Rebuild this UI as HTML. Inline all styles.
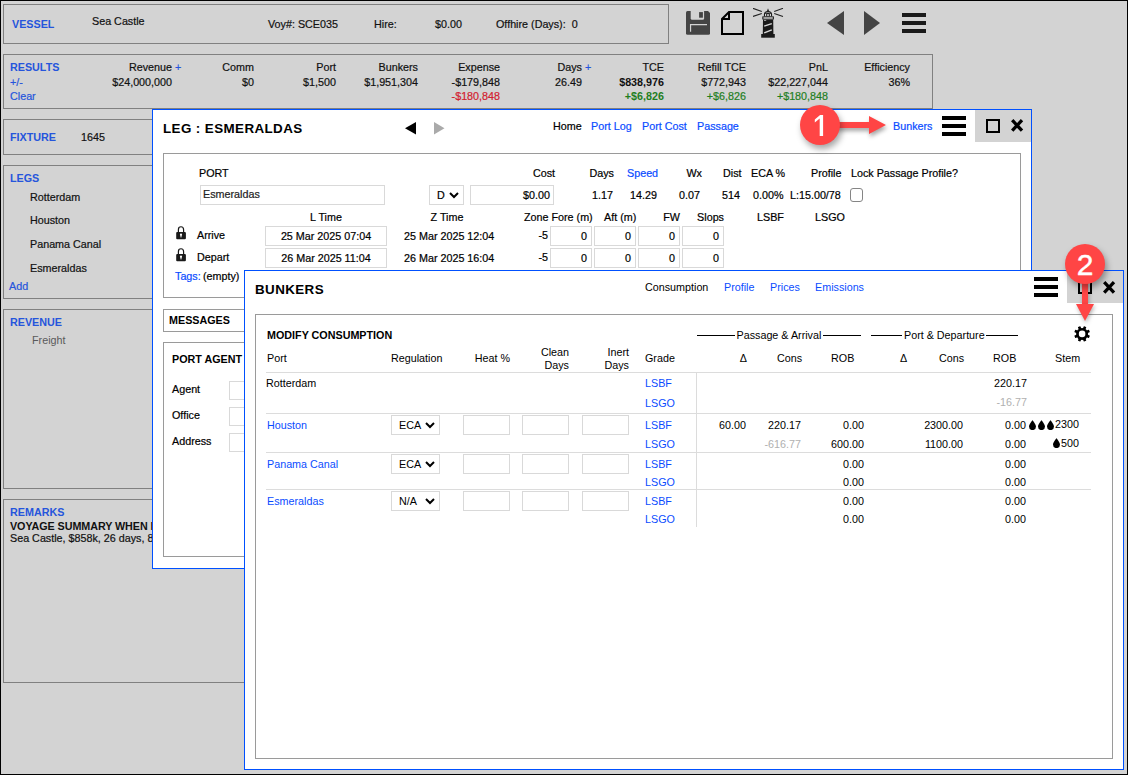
<!DOCTYPE html><html><head><meta charset="utf-8"><style>html,body{margin:0;padding:0;}body{width:1128px;height:775px;overflow:hidden;position:relative;background:#d3d3d3;font-family:'Liberation Sans', sans-serif;}.t{position:absolute;white-space:pre;-webkit-text-stroke:0.2px currentColor;}.b{position:absolute;box-sizing:content-box;}</style></head><body>
<div class="b" style="left:0px;top:0px;width:1126px;height:773px;border:1px solid #000;background:#d3d3d3;"></div>
<div class="b" style="left:3px;top:4px;width:664px;height:38px;border:1px solid #808080;background:transparent;"></div>
<div class="t" style="top:18px;font-size:10.75px;line-height:12px;color:#2555dc;font-weight:bold;-webkit-text-stroke:0;left:12px;">VESSEL</div>
<div class="t" style="top:15px;font-size:10.75px;line-height:12px;color:#111;left:92px;">Sea Castle</div>
<div class="t" style="top:17.5px;font-size:10.75px;line-height:12px;color:#111;left:268px;">Voy#: SCE035</div>
<div class="t" style="top:18px;font-size:10.75px;line-height:12px;color:#111;left:374px;">Hire:</div>
<div class="t" style="top:18px;font-size:10.75px;line-height:12px;color:#111;left:435px;">$0.00</div>
<div class="t" style="top:18px;font-size:10.75px;line-height:12px;color:#111;left:496px;">Offhire (Days):  0</div>
<svg class="b" style="left:686px;top:11px;" width="24" height="24" viewBox="0 0 24 24"><path d="M0 1.5Q0 0 1.5 0H22L24 2V22.2Q24 23.7 22.5 23.7H1.5Q0 23.7 0 22.2Z" fill="#444"/><path d="M4.7 0H18.1V7.3Q18.1 8.8 16.6 8.8H6.2Q4.7 8.8 4.7 7.3Z" fill="#d3d3d3"/><rect x="13.1" y="1.1" width="3.8" height="5.6" fill="#444"/><path d="M4.55 20.8V13.65H21" fill="none" stroke="#d3d3d3" stroke-width="1.2"/></svg>
<svg class="b" style="left:721px;top:11px;" width="24" height="24" viewBox="0 0 24 24"><path d="M8 1H22V23H1V8Z M1 8H8V1" fill="none" stroke="#000" stroke-width="2"/></svg>
<svg class="b" style="left:753px;top:8px;" width="31" height="31" viewBox="0 0 31 31"><path d="M0 0.3L8.8 3.5M0 8.4L8.8 5.4M30 0.3L21.2 3.5M30 8.4L21.2 5.4" stroke="#222" stroke-width="1.1"/><path d="M15 0.2L16.1 3.2H13.9Z" fill="#1a1a1a"/><path d="M10.9 8.6V6.6Q10.9 3 15 3Q19.1 3 19.1 6.6V8.6Z" fill="#1a1a1a"/><rect x="12" y="5.9" width="1.2" height="2.5" fill="#d3d3d3"/><rect x="14.2" y="6.1" width="1.6" height="2" fill="#d3d3d3"/><rect x="16.8" y="5.9" width="1.2" height="2.5" fill="#d3d3d3"/><path d="M12.6 5Q15 3.9 17.4 5" fill="none" stroke="#aaa" stroke-width="0.8"/><rect x="9.3" y="8.4" width="11.6" height="3.1" fill="#1a1a1a"/><rect x="10.4" y="9.3" width="9.4" height="1.4" fill="#d8d8d8"/><path d="M10 11.4H20.2L20.4 26.1H9.8Z" fill="#1a1a1a"/><path d="M11.2 18.1L18.8 15.6M11.2 24.9L18.8 21.9" stroke="#d8d8d8" stroke-width="1.5"/><path d="M11 12.4H13.2" stroke="#bbb" stroke-width="0.9"/><rect x="8.2" y="26" width="13.6" height="3.7" fill="#1a1a1a"/></svg>
<svg class="b" style="left:827px;top:11px;" width="18" height="24" viewBox="0 0 18 24"><path d="M17 0V24L0 12Z" fill="#444"/></svg>
<svg class="b" style="left:863px;top:11px;" width="18" height="24" viewBox="0 0 18 24"><path d="M1 0V24L17 12Z" fill="#444"/></svg>
<div class="b" style="left:902px;top:13px;width:24px;height:4px;background:#1a1a1a;"></div>
<div class="b" style="left:902px;top:21px;width:24px;height:4px;background:#1a1a1a;"></div>
<div class="b" style="left:902px;top:29px;width:24px;height:4px;background:#1a1a1a;"></div>
<div class="b" style="left:3px;top:54px;width:928px;height:53px;border:1px solid #808080;background:transparent;"></div>
<div class="t" style="top:61px;font-size:10.75px;line-height:12px;color:#2555dc;font-weight:bold;-webkit-text-stroke:0;left:10px;">RESULTS</div>
<div class="t" style="top:76px;font-size:10.75px;line-height:12px;color:#2555dc;left:10px;">+/-</div>
<div class="t" style="top:90px;font-size:10.75px;line-height:12px;color:#2555dc;left:10px;">Clear</div>
<div class="t" style="top:61px;font-size:10.75px;line-height:12px;color:#111;left:-128px;width:300px;text-align:right;">Revenue</div>
<div class="t" style="top:76px;font-size:10.75px;line-height:12px;color:#111;left:-128px;width:300px;text-align:right;">$24,000,000</div>
<div class="t" style="top:61px;font-size:10.75px;line-height:12px;color:#111;left:-46px;width:300px;text-align:right;">Comm</div>
<div class="t" style="top:76px;font-size:10.75px;line-height:12px;color:#111;left:-46px;width:300px;text-align:right;">$0</div>
<div class="t" style="top:61px;font-size:10.75px;line-height:12px;color:#111;left:36px;width:300px;text-align:right;">Port</div>
<div class="t" style="top:76px;font-size:10.75px;line-height:12px;color:#111;left:36px;width:300px;text-align:right;">$1,500</div>
<div class="t" style="top:61px;font-size:10.75px;line-height:12px;color:#111;left:118px;width:300px;text-align:right;">Bunkers</div>
<div class="t" style="top:76px;font-size:10.75px;line-height:12px;color:#111;left:118px;width:300px;text-align:right;">$1,951,304</div>
<div class="t" style="top:61px;font-size:10.75px;line-height:12px;color:#111;left:200px;width:300px;text-align:right;">Expense</div>
<div class="t" style="top:76px;font-size:10.75px;line-height:12px;color:#111;left:200px;width:300px;text-align:right;">-$179,848</div>
<div class="t" style="top:61px;font-size:10.75px;line-height:12px;color:#111;left:282px;width:300px;text-align:right;">Days</div>
<div class="t" style="top:76px;font-size:10.75px;line-height:12px;color:#111;left:282px;width:300px;text-align:right;">26.49</div>
<div class="t" style="top:61px;font-size:10.75px;line-height:12px;color:#111;left:364px;width:300px;text-align:right;">TCE</div>
<div class="t" style="top:76px;font-size:10.75px;line-height:12px;color:#111;font-weight:bold;-webkit-text-stroke:0;left:364px;width:300px;text-align:right;">$838,976</div>
<div class="t" style="top:61px;font-size:10.75px;line-height:12px;color:#111;left:446px;width:300px;text-align:right;">Refill TCE</div>
<div class="t" style="top:76px;font-size:10.75px;line-height:12px;color:#111;left:446px;width:300px;text-align:right;">$772,943</div>
<div class="t" style="top:61px;font-size:10.75px;line-height:12px;color:#111;left:528px;width:300px;text-align:right;">PnL</div>
<div class="t" style="top:76px;font-size:10.75px;line-height:12px;color:#111;left:528px;width:300px;text-align:right;">$22,227,044</div>
<div class="t" style="top:61px;font-size:10.75px;line-height:12px;color:#111;left:610px;width:300px;text-align:right;">Efficiency</div>
<div class="t" style="top:76px;font-size:10.75px;line-height:12px;color:#111;left:610px;width:300px;text-align:right;">36%</div>
<div class="t" style="top:61px;font-size:10.75px;line-height:12px;color:#2555dc;left:175px;">+</div>
<div class="t" style="top:61px;font-size:10.75px;line-height:12px;color:#2555dc;left:585px;">+</div>
<div class="t" style="top:90px;font-size:10.75px;line-height:12px;color:#d2202f;left:200px;width:300px;text-align:right;">-$180,848</div>
<div class="t" style="top:90px;font-size:10.75px;line-height:12px;color:#1f7f1f;font-weight:bold;-webkit-text-stroke:0;left:364px;width:300px;text-align:right;">+$6,826</div>
<div class="t" style="top:90px;font-size:10.75px;line-height:12px;color:#1f7f1f;left:446px;width:300px;text-align:right;">+$6,826</div>
<div class="t" style="top:90px;font-size:10.75px;line-height:12px;color:#1f7f1f;left:528px;width:300px;text-align:right;">+$180,848</div>
<div class="b" style="left:3px;top:119px;width:396px;height:34px;border:1px solid #808080;background:transparent;"></div>
<div class="t" style="top:131px;font-size:10.75px;line-height:12px;color:#2555dc;font-weight:bold;-webkit-text-stroke:0;left:10px;">FIXTURE</div>
<div class="t" style="top:131px;font-size:10.75px;line-height:12px;color:#111;left:81px;">1645</div>
<div class="b" style="left:3px;top:165px;width:396px;height:132px;border:1px solid #808080;background:transparent;"></div>
<div class="t" style="top:172px;font-size:10.75px;line-height:12px;color:#2555dc;font-weight:bold;-webkit-text-stroke:0;left:10px;">LEGS</div>
<div class="t" style="top:191px;font-size:10.75px;line-height:12px;color:#111;left:30px;">Rotterdam</div>
<div class="t" style="top:214px;font-size:10.75px;line-height:12px;color:#111;left:30px;">Houston</div>
<div class="t" style="top:238px;font-size:10.75px;line-height:12px;color:#111;left:30px;">Panama Canal</div>
<div class="t" style="top:262px;font-size:10.75px;line-height:12px;color:#111;left:30px;">Esmeraldas</div>
<div class="t" style="top:280px;font-size:10.75px;line-height:12px;color:#2555dc;left:9px;">Add</div>
<div class="b" style="left:3px;top:309px;width:396px;height:178px;border:1px solid #808080;background:transparent;"></div>
<div class="t" style="top:316px;font-size:10.75px;line-height:12px;color:#2555dc;font-weight:bold;-webkit-text-stroke:0;left:10px;">REVENUE</div>
<div class="t" style="top:334px;font-size:10.75px;line-height:12px;color:#5a5a5a;left:32px;-webkit-text-stroke:0;">Freight</div>
<div class="b" style="left:3px;top:499px;width:396px;height:182px;border:1px solid #808080;background:transparent;"></div>
<div class="t" style="top:506px;font-size:10.75px;line-height:12px;color:#2555dc;font-weight:bold;-webkit-text-stroke:0;left:10px;">REMARKS</div>
<div class="t" style="top:520px;font-size:10.75px;line-height:12px;color:#111;font-weight:bold;-webkit-text-stroke:0;letter-spacing:-0.06px;left:10px;">VOYAGE SUMMARY WHEN DONE</div>
<div class="t" style="top:532px;font-size:10.75px;line-height:12px;color:#111;left:10px;">Sea Castle, $858k, 26 days, 8 ports</div>
<div class="b" style="left:152px;top:109px;width:878px;height:458px;border:1px solid #0050ff;background:#fff;"></div>
<div class="t" style="top:121px;font-size:13.4px;line-height:16px;color:#000;font-weight:bold;-webkit-text-stroke:0;letter-spacing:0.4px;left:163px;">LEG : ESMERALDAS</div>
<svg class="b" style="left:405px;top:121.7px;" width="12" height="13" viewBox="0 0 12 13"><path d="M11 0V12.5L0 6.25Z" fill="#000"/></svg>
<svg class="b" style="left:434px;top:122px;" width="11" height="13" viewBox="0 0 11 13"><path d="M0 0V12.5L10.5 6.25Z" fill="#aaa"/></svg>
<div class="t" style="top:120px;font-size:10.75px;line-height:12px;color:#000;left:553px;">Home</div>
<div class="t" style="top:120px;font-size:10.75px;line-height:12px;color:#0a4cff;left:591px;">Port Log</div>
<div class="t" style="top:120px;font-size:10.75px;line-height:12px;color:#0a4cff;left:642px;">Port Cost</div>
<div class="t" style="top:120px;font-size:10.75px;line-height:12px;color:#0a4cff;left:697px;">Passage</div>
<div class="t" style="top:120px;font-size:10.75px;line-height:12px;color:#0a4cff;left:893px;">Bunkers</div>
<div class="b" style="left:942px;top:116px;width:24px;height:4px;background:#000;"></div>
<div class="b" style="left:942px;top:124px;width:24px;height:4px;background:#000;"></div>
<div class="b" style="left:942px;top:132px;width:24px;height:4px;background:#000;"></div>
<div class="b" style="left:975px;top:110px;width:56px;height:32px;background:#d3d3d3;"></div>
<div class="b" style="left:986px;top:119px;width:10px;height:10px;border:2px solid #000;background:transparent;"></div>
<svg class="b" style="left:1011px;top:119px;" width="13" height="13" viewBox="0 0 13 13"><path d="M1.2 1.2L11 11.6M11 1.2L1.2 11.6" stroke="#000" stroke-width="3.3"/></svg>
<div class="b" style="left:163px;top:153px;width:856px;height:143px;border:1px solid #9a9a9a;background:transparent;"></div>
<div class="t" style="top:167px;font-size:10.75px;line-height:12px;color:#000;left:199px;">PORT</div>
<div class="b" style="left:200px;top:185px;width:183px;height:18px;border:1px solid #d9d9d9;background:#fff;"></div>
<div class="t" style="top:188px;font-size:10.75px;line-height:12px;color:#222;left:203px;">Esmeraldas</div>
<div class="b" style="left:429px;top:185px;width:33px;height:18px;border:1px solid #d9d9d9;background:#fff;"></div>
<div class="t" style="top:189px;font-size:10.75px;line-height:12px;color:#000;left:437px;">D</div>
<svg class="b" style="left:449px;top:192px;" width="10" height="7" viewBox="0 0 10 7"><path d="M1 1L5 5L9 1" fill="none" stroke="#000" stroke-width="2"/></svg>
<div class="b" style="left:470px;top:185px;width:82px;height:18px;border:1px solid #d9d9d9;background:#fff;"></div>
<div class="t" style="top:189px;font-size:10.75px;line-height:12px;color:#000;left:250px;width:300px;text-align:right;">$0.00</div>
<div class="t" style="top:167px;font-size:10.75px;line-height:12px;color:#000;left:255px;width:300px;text-align:right;">Cost</div>
<div class="t" style="top:167px;font-size:10.75px;line-height:12px;color:#000;left:314px;width:300px;text-align:right;">Days</div>
<div class="t" style="top:167px;font-size:10.75px;line-height:12px;color:#0a4cff;left:627px;">Speed</div>
<div class="t" style="top:167px;font-size:10.75px;line-height:12px;color:#000;left:402px;width:300px;text-align:right;">Wx</div>
<div class="t" style="top:167px;font-size:10.75px;line-height:12px;color:#000;left:723px;">Dist</div>
<div class="t" style="top:167px;font-size:10.75px;line-height:12px;color:#000;left:751px;">ECA %</div>
<div class="t" style="top:167px;font-size:10.75px;line-height:12px;color:#000;left:811px;">Profile</div>
<div class="t" style="top:167px;font-size:10.75px;line-height:12px;color:#000;left:851px;">Lock Passage Profile?</div>
<div class="t" style="top:189px;font-size:10.75px;line-height:12px;color:#000;left:313px;width:300px;text-align:right;">1.17</div>
<div class="t" style="top:189px;font-size:10.75px;line-height:12px;color:#000;left:357px;width:300px;text-align:right;">14.29</div>
<div class="t" style="top:189px;font-size:10.75px;line-height:12px;color:#000;left:400px;width:300px;text-align:right;">0.07</div>
<div class="t" style="top:189px;font-size:10.75px;line-height:12px;color:#000;left:440px;width:300px;text-align:right;">514</div>
<div class="t" style="top:189px;font-size:10.75px;line-height:12px;color:#000;left:753px;">0.00%</div>
<div class="t" style="top:189px;font-size:10.75px;line-height:12px;color:#000;left:790px;">L:15.00/78</div>
<div class="b" style="left:850px;top:188px;width:11px;height:12px;border:1px solid #858585;background:#fff;border-radius:3px;"></div>
<div class="t" style="top:211px;font-size:10.75px;line-height:12px;color:#000;left:176.0px;width:300px;text-align:center;">L Time</div>
<div class="t" style="top:211px;font-size:10.75px;line-height:12px;color:#000;left:297.0px;width:300px;text-align:center;">Z Time</div>
<div class="t" style="top:211px;font-size:10.75px;line-height:12px;color:#000;left:524px;">Zone Fore (m)</div>
<div class="t" style="top:211px;font-size:10.75px;line-height:12px;color:#000;left:604px;">Aft (m)</div>
<div class="t" style="top:211px;font-size:10.75px;line-height:12px;color:#000;left:380px;width:300px;text-align:right;">FW</div>
<div class="t" style="top:211px;font-size:10.75px;line-height:12px;color:#000;left:424px;width:300px;text-align:right;">Slops</div>
<div class="t" style="top:211px;font-size:10.75px;line-height:12px;color:#000;left:757px;">LSBF</div>
<div class="t" style="top:211px;font-size:10.75px;line-height:12px;color:#000;left:815px;">LSGO</div>
<svg class="b" style="left:176px;top:226px;" width="10" height="14" viewBox="0 0 10 14"><path d="M2.4 6.5V3.7Q2.4 0.75 5 0.75Q7.6 0.75 7.6 3.7V6.5" fill="none" stroke="#1a1a1a" stroke-width="1.2"/><rect x="0.2" y="5.9" width="9.7" height="7.4" rx="1" fill="#1a1a1a"/><circle cx="5" cy="8.7" r="1.1" fill="#fff"/><rect x="4.5" y="8.7" width="1" height="2.7" fill="#fff"/></svg>
<svg class="b" style="left:176px;top:248px;" width="10" height="14" viewBox="0 0 10 14"><path d="M2.4 6.5V3.7Q2.4 0.75 5 0.75Q7.6 0.75 7.6 3.7V6.5" fill="none" stroke="#1a1a1a" stroke-width="1.2"/><rect x="0.2" y="5.9" width="9.7" height="7.4" rx="1" fill="#1a1a1a"/><circle cx="5" cy="8.7" r="1.1" fill="#fff"/><rect x="4.5" y="8.7" width="1" height="2.7" fill="#fff"/></svg>
<div class="t" style="top:229px;font-size:10.75px;line-height:12px;color:#000;left:197px;">Arrive</div>
<div class="t" style="top:251px;font-size:10.75px;line-height:12px;color:#000;left:197px;">Depart</div>
<div class="b" style="left:265px;top:226px;width:120px;height:18px;border:1px solid #d9d9d9;background:#fff;"></div>
<div class="b" style="left:265px;top:248px;width:120px;height:18px;border:1px solid #d9d9d9;background:#fff;"></div>
<div class="t" style="top:230px;font-size:10.75px;line-height:12px;color:#000;left:176.0px;width:300px;text-align:center;">25 Mar 2025 07:04</div>
<div class="t" style="top:252px;font-size:10.75px;line-height:12px;color:#000;left:176.0px;width:300px;text-align:center;">26 Mar 2025 11:04</div>
<div class="t" style="top:230px;font-size:10.75px;line-height:12px;color:#000;left:404px;">25 Mar 2025 12:04</div>
<div class="t" style="top:252px;font-size:10.75px;line-height:12px;color:#000;left:404px;">26 Mar 2025 16:04</div>
<div class="t" style="top:229px;font-size:10.75px;line-height:12px;color:#000;left:248px;width:300px;text-align:right;">-5</div>
<div class="t" style="top:251px;font-size:10.75px;line-height:12px;color:#000;left:248px;width:300px;text-align:right;">-5</div>
<div class="b" style="left:550px;top:226px;width:40px;height:18px;border:1px solid #d9d9d9;background:#fff;"></div>
<div class="t" style="top:230px;font-size:10.75px;line-height:12px;color:#000;left:287px;width:300px;text-align:right;">0</div>
<div class="b" style="left:550px;top:248px;width:40px;height:18px;border:1px solid #d9d9d9;background:#fff;"></div>
<div class="t" style="top:252px;font-size:10.75px;line-height:12px;color:#000;left:287px;width:300px;text-align:right;">0</div>
<div class="b" style="left:594px;top:226px;width:40px;height:18px;border:1px solid #d9d9d9;background:#fff;"></div>
<div class="t" style="top:230px;font-size:10.75px;line-height:12px;color:#000;left:331px;width:300px;text-align:right;">0</div>
<div class="b" style="left:594px;top:248px;width:40px;height:18px;border:1px solid #d9d9d9;background:#fff;"></div>
<div class="t" style="top:252px;font-size:10.75px;line-height:12px;color:#000;left:331px;width:300px;text-align:right;">0</div>
<div class="b" style="left:638px;top:226px;width:40px;height:18px;border:1px solid #d9d9d9;background:#fff;"></div>
<div class="t" style="top:230px;font-size:10.75px;line-height:12px;color:#000;left:375px;width:300px;text-align:right;">0</div>
<div class="b" style="left:638px;top:248px;width:40px;height:18px;border:1px solid #d9d9d9;background:#fff;"></div>
<div class="t" style="top:252px;font-size:10.75px;line-height:12px;color:#000;left:375px;width:300px;text-align:right;">0</div>
<div class="b" style="left:682px;top:226px;width:40px;height:18px;border:1px solid #d9d9d9;background:#fff;"></div>
<div class="t" style="top:230px;font-size:10.75px;line-height:12px;color:#000;left:419px;width:300px;text-align:right;">0</div>
<div class="b" style="left:682px;top:248px;width:40px;height:18px;border:1px solid #d9d9d9;background:#fff;"></div>
<div class="t" style="top:252px;font-size:10.75px;line-height:12px;color:#000;left:419px;width:300px;text-align:right;">0</div>
<div class="t" style="top:270px;font-size:10.75px;line-height:12px;color:#0a4cff;left:175px;">Tags:</div>
<div class="t" style="top:270px;font-size:10.75px;line-height:12px;color:#000;left:203px;">(empty)</div>
<div class="b" style="left:163px;top:309px;width:236px;height:21px;border:1px solid #9a9a9a;background:transparent;"></div>
<div class="t" style="top:314px;font-size:10.75px;line-height:12px;color:#000;font-weight:bold;-webkit-text-stroke:0;left:169px;">MESSAGES</div>
<div class="b" style="left:163px;top:342px;width:236px;height:213px;border:1px solid #9a9a9a;background:transparent;"></div>
<div class="t" style="top:353px;font-size:10.75px;line-height:12px;color:#000;font-weight:bold;-webkit-text-stroke:0;left:172px;">PORT AGENT</div>
<div class="t" style="top:383px;font-size:10.75px;line-height:12px;color:#000;left:172px;">Agent</div>
<div class="t" style="top:409px;font-size:10.75px;line-height:12px;color:#000;left:172px;">Office</div>
<div class="t" style="top:435px;font-size:10.75px;line-height:12px;color:#000;left:172px;">Address</div>
<div class="b" style="left:229px;top:381px;width:170px;height:17px;border:1px solid #d9d9d9;background:#fff;"></div>
<div class="b" style="left:229px;top:407px;width:170px;height:17px;border:1px solid #d9d9d9;background:#fff;"></div>
<div class="b" style="left:229px;top:433px;width:170px;height:17px;border:1px solid #d9d9d9;background:#fff;"></div>
<svg class="b" style="left:836px;top:114px;filter:drop-shadow(1px 3px 2px rgba(0,0,0,0.35));" width="54" height="24" viewBox="0 0 54 24"><path d="M0 8H33V2L50 11L33 20V14H0Z" fill="#ff4545"/></svg>
<div class="b" style="left:800px;top:105px;width:40px;height:40px;border-radius:50%;background:#ff4545;box-shadow:2px 4px 6px rgba(0,0,0,0.35);"></div>
<svg class="b" style="left:800px;top:105px;" width="40" height="40" viewBox="0 0 40 40"><path d="M23.1 10H20.1L14.8 14.5V17.4L19.7 13.6V31H23.1Z" fill="#fff"/></svg>
<div class="b" style="left:244px;top:270px;width:878px;height:498px;border:1px solid #0050ff;background:#fff;"></div>
<div class="t" style="top:282px;font-size:13.4px;line-height:16px;color:#000;font-weight:bold;-webkit-text-stroke:0;letter-spacing:0.4px;left:255px;">BUNKERS</div>
<div class="t" style="top:281px;font-size:10.75px;line-height:12px;color:#000;-webkit-text-stroke:0;left:645px;">Consumption</div>
<div class="t" style="top:281px;font-size:10.75px;line-height:12px;color:#0a4cff;-webkit-text-stroke:0;left:724px;">Profile</div>
<div class="t" style="top:281px;font-size:10.75px;line-height:12px;color:#0a4cff;-webkit-text-stroke:0;left:770px;">Prices</div>
<div class="t" style="top:281px;font-size:10.75px;line-height:12px;color:#0a4cff;-webkit-text-stroke:0;left:815px;">Emissions</div>
<div class="b" style="left:1034px;top:277px;width:24px;height:4px;background:#000;"></div>
<div class="b" style="left:1034px;top:285px;width:24px;height:4px;background:#000;"></div>
<div class="b" style="left:1034px;top:293px;width:24px;height:4px;background:#000;"></div>
<div class="b" style="left:1067px;top:271px;width:56px;height:32px;background:#d3d3d3;"></div>
<div class="b" style="left:1078px;top:280px;width:10px;height:10px;border:2px solid #000;background:transparent;"></div>
<svg class="b" style="left:1103px;top:281px;" width="13" height="13" viewBox="0 0 13 13"><path d="M1.2 1.2L11 11.6M11 1.2L1.2 11.6" stroke="#000" stroke-width="3.3"/></svg>
<div class="b" style="left:255px;top:314px;width:856px;height:443px;border:1px solid #9a9a9a;background:transparent;"></div>
<div class="t" style="top:329px;font-size:10.75px;line-height:12px;color:#000;font-weight:bold;-webkit-text-stroke:0;left:267px;">MODIFY CONSUMPTION</div>
<div class="b" style="left:697px;top:335px;width:38px;height:1px;background:#000;"></div>
<div class="t" style="top:329px;font-size:10.75px;line-height:12px;color:#000;-webkit-text-stroke:0;left:736.5px;">Passage &amp; Arrival</div>
<div class="b" style="left:823px;top:335px;width:38px;height:1px;background:#000;"></div>
<div class="b" style="left:871px;top:335px;width:31px;height:1px;background:#000;"></div>
<div class="t" style="top:329px;font-size:10.75px;line-height:12px;color:#000;-webkit-text-stroke:0;left:904px;">Port &amp; Departure</div>
<div class="b" style="left:986px;top:335px;width:32px;height:1px;background:#000;"></div>
<svg class="b" style="left:1072px;top:324px;" width="20" height="20" viewBox="0 0 20 20"><g transform="translate(10.1 9.9)"><g fill="#000"><rect x="-1.35" y="-7.9" width="2.7" height="4.5" rx="0.4" transform="rotate(22.5)"/><rect x="-1.35" y="-7.9" width="2.7" height="4.5" rx="0.4" transform="rotate(67.5)"/><rect x="-1.35" y="-7.9" width="2.7" height="4.5" rx="0.4" transform="rotate(112.5)"/><rect x="-1.35" y="-7.9" width="2.7" height="4.5" rx="0.4" transform="rotate(157.5)"/><rect x="-1.35" y="-7.9" width="2.7" height="4.5" rx="0.4" transform="rotate(202.5)"/><rect x="-1.35" y="-7.9" width="2.7" height="4.5" rx="0.4" transform="rotate(247.5)"/><rect x="-1.35" y="-7.9" width="2.7" height="4.5" rx="0.4" transform="rotate(292.5)"/><rect x="-1.35" y="-7.9" width="2.7" height="4.5" rx="0.4" transform="rotate(337.5)"/></g><circle r="6.0" fill="#000"/><circle r="3.3" fill="#fff"/></g></svg>
<div class="t" style="top:352px;font-size:10.75px;line-height:12px;color:#000;-webkit-text-stroke:0;left:267px;">Port</div>
<div class="t" style="top:352px;font-size:10.75px;line-height:12px;color:#000;-webkit-text-stroke:0;left:391px;">Regulation</div>
<div class="t" style="top:352px;font-size:10.75px;line-height:12px;color:#000;-webkit-text-stroke:0;left:210px;width:300px;text-align:right;">Heat %</div>
<div class="t" style="top:346px;font-size:10.75px;line-height:12px;color:#000;-webkit-text-stroke:0;left:269px;width:300px;text-align:right;">Clean</div>
<div class="t" style="top:359px;font-size:10.75px;line-height:12px;color:#000;-webkit-text-stroke:0;left:269px;width:300px;text-align:right;">Days</div>
<div class="t" style="top:346px;font-size:10.75px;line-height:12px;color:#000;-webkit-text-stroke:0;left:329px;width:300px;text-align:right;">Inert</div>
<div class="t" style="top:359px;font-size:10.75px;line-height:12px;color:#000;-webkit-text-stroke:0;left:329px;width:300px;text-align:right;">Days</div>
<div class="t" style="top:352px;font-size:10.75px;line-height:12px;color:#000;-webkit-text-stroke:0;left:645px;">Grade</div>
<div class="t" style="top:352px;font-size:10.75px;line-height:12px;color:#000;-webkit-text-stroke:0;left:447px;width:300px;text-align:right;">Δ</div>
<div class="t" style="top:352px;font-size:10.75px;line-height:12px;color:#000;-webkit-text-stroke:0;left:777px;">Cons</div>
<div class="t" style="top:352px;font-size:10.75px;line-height:12px;color:#000;-webkit-text-stroke:0;left:831px;">ROB</div>
<div class="t" style="top:352px;font-size:10.75px;line-height:12px;color:#000;-webkit-text-stroke:0;left:900px;">Δ</div>
<div class="t" style="top:352px;font-size:10.75px;line-height:12px;color:#000;-webkit-text-stroke:0;left:939px;">Cons</div>
<div class="t" style="top:352px;font-size:10.75px;line-height:12px;color:#000;-webkit-text-stroke:0;left:993px;">ROB</div>
<div class="t" style="top:352px;font-size:10.75px;line-height:12px;color:#000;-webkit-text-stroke:0;left:1055px;">Stem</div>
<div class="b" style="left:266px;top:372px;width:825px;height:1px;background:#dcdcdc;"></div>
<div class="b" style="left:696px;top:373px;width:1px;height:154px;background:#dcdcdc;"></div>
<div class="b" style="left:266px;top:413px;width:825px;height:1px;background:#dcdcdc;"></div>
<div class="b" style="left:266px;top:452px;width:825px;height:1px;background:#dcdcdc;"></div>
<div class="b" style="left:266px;top:489px;width:825px;height:1px;background:#dcdcdc;"></div>
<div class="t" style="top:377px;font-size:10.75px;line-height:12px;color:#000;-webkit-text-stroke:0;left:266px;">Rotterdam</div>
<div class="t" style="top:377px;font-size:10.75px;line-height:12px;color:#0a4cff;-webkit-text-stroke:0;left:645px;">LSBF</div>
<div class="t" style="top:397px;font-size:10.75px;line-height:12px;color:#0a4cff;-webkit-text-stroke:0;left:645px;">LSGO</div>
<div class="t" style="top:377px;font-size:10.75px;line-height:12px;color:#000;-webkit-text-stroke:0;left:727px;width:300px;text-align:right;">220.17</div>
<div class="t" style="top:396px;font-size:10.75px;line-height:12px;color:#b0b0b0;-webkit-text-stroke:0;left:727px;width:300px;text-align:right;">-16.77</div>
<div class="t" style="top:419px;font-size:10.75px;line-height:12px;color:#0a4cff;-webkit-text-stroke:0;left:267px;">Houston</div>
<div class="b" style="left:391px;top:415px;width:47px;height:18px;border:1px solid #d9d9d9;background:#fff;"></div>
<div class="t" style="top:419px;font-size:10.75px;line-height:12px;color:#000;-webkit-text-stroke:0;left:399px;">ECA</div>
<svg class="b" style="left:425px;top:422px;" width="10" height="7" viewBox="0 0 10 7"><path d="M1 1L5 5L9 1" fill="none" stroke="#000" stroke-width="2"/></svg>
<div class="b" style="left:463px;top:415px;width:45px;height:18px;border:1px solid #d9d9d9;background:#fff;"></div>
<div class="b" style="left:522px;top:415px;width:45px;height:18px;border:1px solid #d9d9d9;background:#fff;"></div>
<div class="b" style="left:582px;top:415px;width:45px;height:18px;border:1px solid #d9d9d9;background:#fff;"></div>
<div class="t" style="top:419px;font-size:10.75px;line-height:12px;color:#0a4cff;-webkit-text-stroke:0;left:645px;">LSBF</div>
<div class="t" style="top:438px;font-size:10.75px;line-height:12px;color:#0a4cff;-webkit-text-stroke:0;left:645px;">LSGO</div>
<div class="t" style="top:458px;font-size:10.75px;line-height:12px;color:#0a4cff;-webkit-text-stroke:0;left:267px;">Panama Canal</div>
<div class="b" style="left:391px;top:454px;width:47px;height:18px;border:1px solid #d9d9d9;background:#fff;"></div>
<div class="t" style="top:458px;font-size:10.75px;line-height:12px;color:#000;-webkit-text-stroke:0;left:399px;">ECA</div>
<svg class="b" style="left:425px;top:461px;" width="10" height="7" viewBox="0 0 10 7"><path d="M1 1L5 5L9 1" fill="none" stroke="#000" stroke-width="2"/></svg>
<div class="b" style="left:463px;top:454px;width:45px;height:18px;border:1px solid #d9d9d9;background:#fff;"></div>
<div class="b" style="left:522px;top:454px;width:45px;height:18px;border:1px solid #d9d9d9;background:#fff;"></div>
<div class="b" style="left:582px;top:454px;width:45px;height:18px;border:1px solid #d9d9d9;background:#fff;"></div>
<div class="t" style="top:458px;font-size:10.75px;line-height:12px;color:#0a4cff;-webkit-text-stroke:0;left:645px;">LSBF</div>
<div class="t" style="top:476px;font-size:10.75px;line-height:12px;color:#0a4cff;-webkit-text-stroke:0;left:645px;">LSGO</div>
<div class="t" style="top:495px;font-size:10.75px;line-height:12px;color:#0a4cff;-webkit-text-stroke:0;left:267px;">Esmeraldas</div>
<div class="b" style="left:391px;top:491px;width:47px;height:18px;border:1px solid #d9d9d9;background:#fff;"></div>
<div class="t" style="top:495px;font-size:10.75px;line-height:12px;color:#000;-webkit-text-stroke:0;left:399px;">N/A</div>
<svg class="b" style="left:425px;top:498px;" width="10" height="7" viewBox="0 0 10 7"><path d="M1 1L5 5L9 1" fill="none" stroke="#000" stroke-width="2"/></svg>
<div class="b" style="left:463px;top:491px;width:45px;height:18px;border:1px solid #d9d9d9;background:#fff;"></div>
<div class="b" style="left:522px;top:491px;width:45px;height:18px;border:1px solid #d9d9d9;background:#fff;"></div>
<div class="b" style="left:582px;top:491px;width:45px;height:18px;border:1px solid #d9d9d9;background:#fff;"></div>
<div class="t" style="top:495px;font-size:10.75px;line-height:12px;color:#0a4cff;-webkit-text-stroke:0;left:645px;">LSBF</div>
<div class="t" style="top:513px;font-size:10.75px;line-height:12px;color:#0a4cff;-webkit-text-stroke:0;left:645px;">LSGO</div>
<div class="t" style="top:419px;font-size:10.75px;line-height:12px;color:#000;-webkit-text-stroke:0;left:446px;width:300px;text-align:right;">60.00</div>
<div class="t" style="top:419px;font-size:10.75px;line-height:12px;color:#000;-webkit-text-stroke:0;left:501px;width:300px;text-align:right;">220.17</div>
<div class="t" style="top:419px;font-size:10.75px;line-height:12px;color:#000;-webkit-text-stroke:0;left:564px;width:300px;text-align:right;">0.00</div>
<div class="t" style="top:419px;font-size:10.75px;line-height:12px;color:#000;-webkit-text-stroke:0;left:663px;width:300px;text-align:right;">2300.00</div>
<div class="t" style="top:419px;font-size:10.75px;line-height:12px;color:#000;-webkit-text-stroke:0;left:726px;width:300px;text-align:right;">0.00</div>
<div class="t" style="top:438px;font-size:10.75px;line-height:12px;color:#b0b0b0;-webkit-text-stroke:0;left:501px;width:300px;text-align:right;">-616.77</div>
<div class="t" style="top:438px;font-size:10.75px;line-height:12px;color:#000;-webkit-text-stroke:0;left:564px;width:300px;text-align:right;">600.00</div>
<div class="t" style="top:438px;font-size:10.75px;line-height:12px;color:#000;-webkit-text-stroke:0;left:663px;width:300px;text-align:right;">1100.00</div>
<div class="t" style="top:438px;font-size:10.75px;line-height:12px;color:#000;-webkit-text-stroke:0;left:726px;width:300px;text-align:right;">0.00</div>
<svg class="b" style="left:1029px;top:419.5px;" width="7" height="10.2" viewBox="0 0 7 10.2"><path d="M3.5 0C3.3 0.8 0 4.3 0 6.6A3.5 3.5 0 0 0 7 6.6C7 4.3 3.7 0.8 3.5 0Z" fill="#000"/></svg>
<svg class="b" style="left:1038px;top:419.5px;" width="7" height="10.2" viewBox="0 0 7 10.2"><path d="M3.5 0C3.3 0.8 0 4.3 0 6.6A3.5 3.5 0 0 0 7 6.6C7 4.3 3.7 0.8 3.5 0Z" fill="#000"/></svg>
<svg class="b" style="left:1047px;top:419.5px;" width="7" height="10.2" viewBox="0 0 7 10.2"><path d="M3.5 0C3.3 0.8 0 4.3 0 6.6A3.5 3.5 0 0 0 7 6.6C7 4.3 3.7 0.8 3.5 0Z" fill="#000"/></svg>
<div class="t" style="top:418px;font-size:10.75px;line-height:12px;color:#000;-webkit-text-stroke:0;left:779px;width:300px;text-align:right;">2300</div>
<svg class="b" style="left:1053px;top:438.3px;" width="7" height="10.2" viewBox="0 0 7 10.2"><path d="M3.5 0C3.3 0.8 0 4.3 0 6.6A3.5 3.5 0 0 0 7 6.6C7 4.3 3.7 0.8 3.5 0Z" fill="#000"/></svg>
<div class="t" style="top:437px;font-size:10.75px;line-height:12px;color:#000;-webkit-text-stroke:0;left:779px;width:300px;text-align:right;">500</div>
<div class="t" style="top:458px;font-size:10.75px;line-height:12px;color:#000;-webkit-text-stroke:0;left:564px;width:300px;text-align:right;">0.00</div>
<div class="t" style="top:476px;font-size:10.75px;line-height:12px;color:#000;-webkit-text-stroke:0;left:564px;width:300px;text-align:right;">0.00</div>
<div class="t" style="top:458px;font-size:10.75px;line-height:12px;color:#000;-webkit-text-stroke:0;left:726px;width:300px;text-align:right;">0.00</div>
<div class="t" style="top:476px;font-size:10.75px;line-height:12px;color:#000;-webkit-text-stroke:0;left:726px;width:300px;text-align:right;">0.00</div>
<div class="t" style="top:495px;font-size:10.75px;line-height:12px;color:#000;-webkit-text-stroke:0;left:564px;width:300px;text-align:right;">0.00</div>
<div class="t" style="top:513px;font-size:10.75px;line-height:12px;color:#000;-webkit-text-stroke:0;left:564px;width:300px;text-align:right;">0.00</div>
<div class="t" style="top:495px;font-size:10.75px;line-height:12px;color:#000;-webkit-text-stroke:0;left:726px;width:300px;text-align:right;">0.00</div>
<div class="t" style="top:513px;font-size:10.75px;line-height:12px;color:#000;-webkit-text-stroke:0;left:726px;width:300px;text-align:right;">0.00</div>
<div class="b" style="left:1082px;top:282px;width:6px;height:24px;background:#ff4545;filter:drop-shadow(1px 2px 2px rgba(0,0,0,0.3));"></div>
<svg class="b" style="left:1075px;top:303px;filter:drop-shadow(1px 2px 2px rgba(0,0,0,0.3));" width="20" height="19" viewBox="0 0 20 19"><path d="M1 1H19L10 18Z" fill="#ff4545"/></svg>
<div class="b" style="left:1065px;top:244px;width:40px;height:40px;border-radius:50%;background:#ff4545;box-shadow:2px 4px 6px rgba(0,0,0,0.35);"></div>
<div class="t" style="top:250px;font-size:30px;line-height:30px;color:#fff;-webkit-text-stroke:0;left:1065.0px;width:40px;text-align:center;-webkit-text-stroke:0.4px #fff;">2</div>
</body></html>
